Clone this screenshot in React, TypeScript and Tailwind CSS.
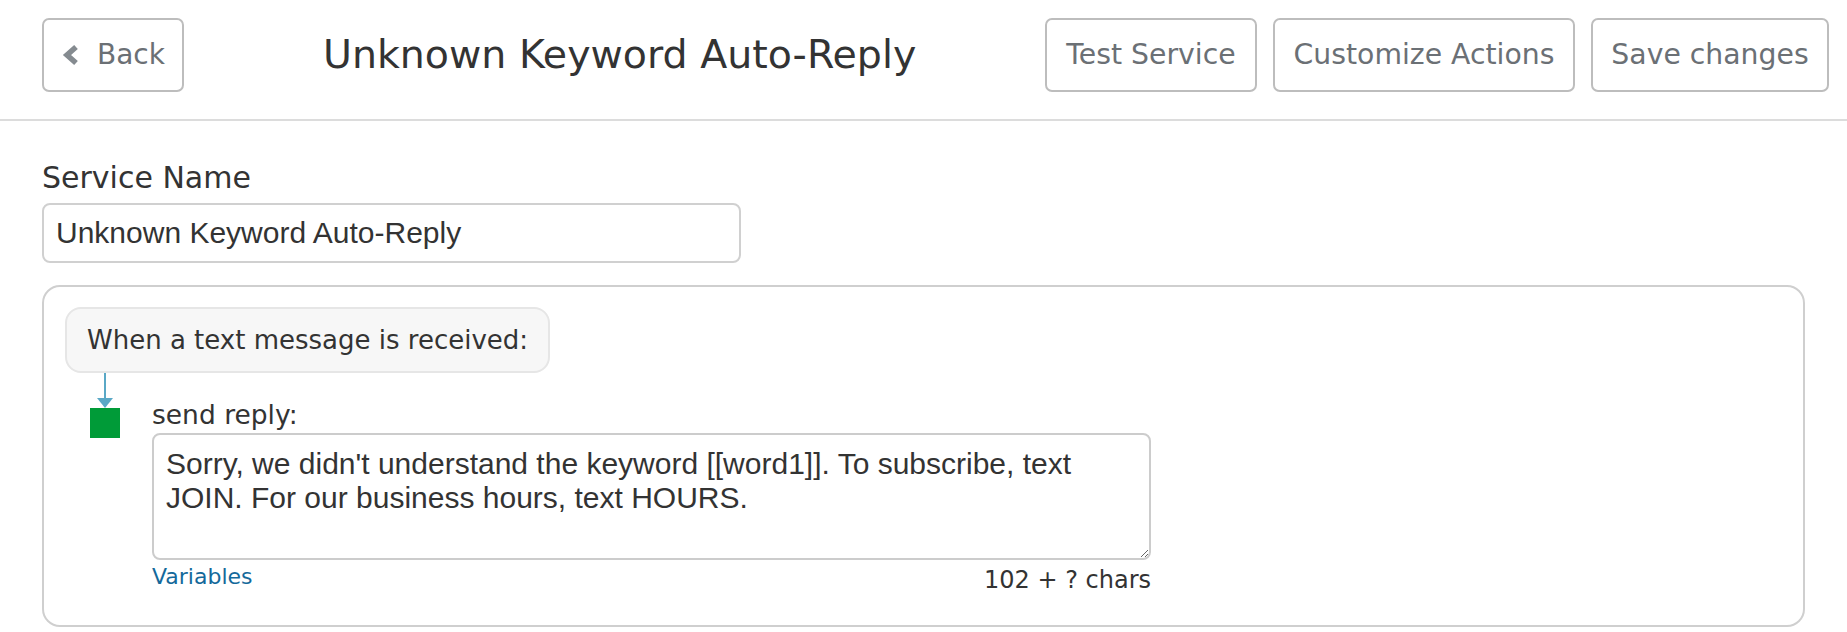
import React from "react";

const sans = { fontFamily: '"DejaVu Sans", Verdana, sans-serif' };

function Btn({ children, className = "" }: { children: React.ReactNode; className?: string }) {
  return (
    <button
      className={`h-[74px] rounded-[7px] border-2 border-[#bdbdbd] bg-white text-[28.3px] text-[#6b7075] flex items-center justify-center whitespace-nowrap ${className}`}
    >
      {children}
    </button>
  );
}

export default function App() {
  const msg =
    "Sorry, we didn't understand the keyword [[word1]]. To subscribe, text JOIN. For our business hours, text HOURS.";
  return (
    <div className="w-[1847px] h-[632px] bg-white text-[#333] overflow-hidden" style={sans}>
      <header className="h-[121px] border-b-2 border-[#dcdcdc] pl-[42px] pr-[18px] pt-[18px] flex items-start">
        <button className="w-[142px] h-[74px] pl-[17px] rounded-[7px] border-2 border-[#bdbdbd] bg-white text-[28px] text-[#6b7075] flex items-center whitespace-nowrap">
          <svg width="20" height="22" viewBox="0 0 20 22" className="mr-[16px] shrink-0">
            <polyline points="15,3 6,11 15,19" fill="none" stroke="#858b90" strokeWidth="5.5" strokeLinejoin="miter" strokeLinecap="butt" />
          </svg>
          Back
        </button>
        <h1 className="ml-[139px] h-[74px] flex items-center text-[39.5px] text-[#333] font-normal whitespace-nowrap">
          Unknown Keyword Auto-Reply
        </h1>
        <div className="ml-auto flex gap-[16px]">
          <Btn className="w-[212px]">Test Service</Btn>
          <Btn className="w-[302px]">Customize Actions</Btn>
          <Btn className="w-[238px]">Save changes</Btn>
        </div>
      </header>

      <main className="px-[42px] pt-[40px]">
        <label className="block text-[30px] leading-[34px] text-[#333]">Service Name</label>
        <input
          readOnly
          defaultValue="Unknown Keyword Auto-Reply"
          className="mt-[8px] block w-[699px] h-[60px] rounded-[8px] border-2 border-[#d0d0d0] px-[12px] text-[30px] text-[#333] outline-none"
          style={{ fontFamily: '"Liberation Sans", Arial, sans-serif' }}
        />

        <section className="mt-[22px] h-[342px] rounded-[18px] border-2 border-[#cfcfcf] pl-[21px] pt-[20px]">
          <div className="inline-flex h-[66px] items-center rounded-[16px] border-2 border-[#e6e6e6] bg-[#f7f7f7] px-[20px] text-[26px] text-[#333] whitespace-nowrap">
            When a text message is received:
          </div>
          <div className="flex">
            <div className="w-[87px] shrink-0 flex flex-col">
              <div className="ml-[39px] w-[2px] h-[25px] bg-[#5aa8c6]" />
              <svg width="16" height="10" viewBox="0 0 16 10" className="ml-[32px] block">
                <polygon points="0,0 16,0 8,10" fill="#5aa8c6" />
              </svg>
              <div className="ml-[25px] w-[30px] h-[30px] bg-[#009b38]" />
            </div>
            <div className="w-[999px] mt-[25px]">
              <div className="text-[26.5px] leading-[34px] h-[34px] text-[#333]">send reply:</div>
              <textarea
                readOnly
                defaultValue={msg}
                className="mt-[1px] block w-[999px] h-[127px] rounded-[8px] border-2 border-[#cccccc] px-[12px] pt-[12px] text-[30px] leading-[34px] text-[#333] outline-none resize-y"
                style={{ fontFamily: '"Liberation Sans", Arial, sans-serif' }}
              />
              <div className="flex justify-between items-start">
                <a className="text-[22px] text-[#14699b]">Variables</a>
                <span className="mt-[2px] text-[24px] text-[#333]">102 + ? chars</span>
              </div>
            </div>
          </div>
        </section>
      </main>
    </div>
  );
}
